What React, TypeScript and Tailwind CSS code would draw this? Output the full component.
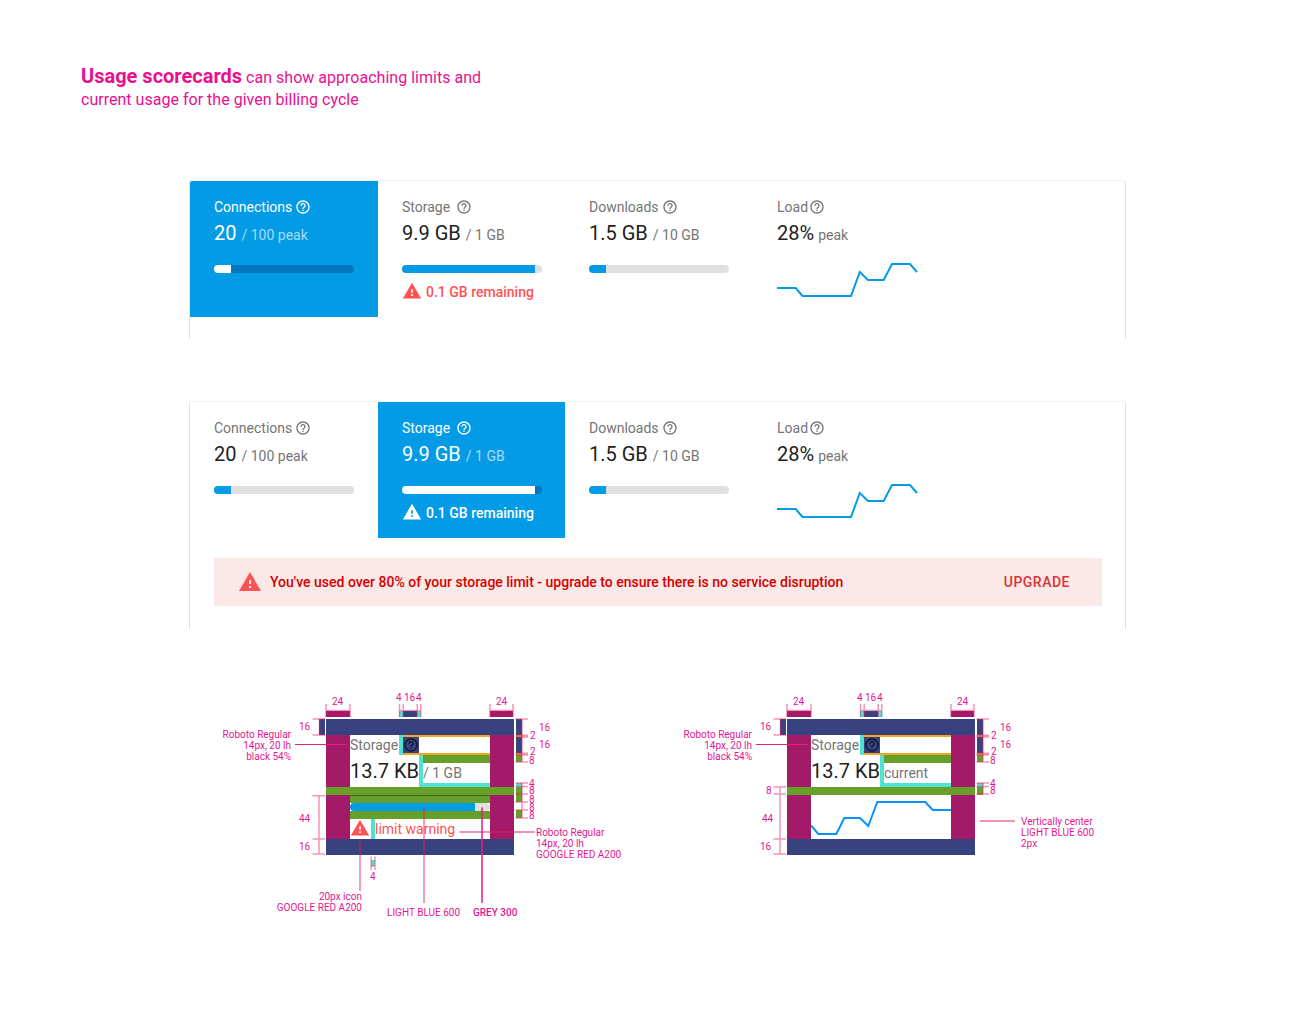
import type { ReactNode } from "react";
import clsx from "clsx";

function HelpIcon({ className }: { className?: string }) {
  return (
    <svg viewBox="0 0 24 24" className={clsx("size-4 shrink-0 fill-current", className)}>
      <path d="M11 18h2v-2h-2v2zm1-16C6.48 2 2 6.48 2 12s4.48 10 10 10 10-4.48 10-10S17.52 2 12 2zm0 18c-4.41 0-8-3.59-8-8s3.59-8 8-8 8 3.59 8 8-3.59 8-8 8zm0-14c-2.21 0-4 1.79-4 4h2c0-1.1.9-2 2-2s2 .9 2 2c0 2-3 1.75-3 5h2c0-2.25 3-2.5 3-5 0-2.21-1.79-4-4-4z" />
    </svg>
  );
}

function WarningIcon({ className }: { className?: string }) {
  return (
    <svg viewBox="0 0 24 24" className={clsx("shrink-0 fill-current", className)}>
      <path d="M1 21h22L12 2 1 21zm12-3h-2v-2h2v2zm0-4h-2v-4h2v4z" />
    </svg>
  );
}

type ScoreProps = {
  label: string;
  labelClass: string;
  tileClass: string;
  value: string;
  detail: string;
  detailClass?: string;
  active?: boolean;
  fillClass?: string;
  warning?: string;
  children?: ReactNode;
};

function Score({ label, labelClass, tileClass, value, detail, detailClass = "ml-[5px]", active, fillClass, warning, children }: ScoreProps) {
  return (
    <div className={clsx("h-[136px] shrink-0 pt-4 pl-6", tileClass, active && "bg-[#039be5]")}>
      <div className={clsx("flex h-5 items-center", active ? "text-white" : "text-[#757575]")}>
        <span className={clsx("shrink-0 whitespace-nowrap text-sm", labelClass)}>{label}</span>
        <HelpIcon />
      </div>
      <div className="flex h-8 items-baseline whitespace-nowrap">
        <span className={clsx("text-xl leading-8", active ? "text-white" : "text-[#212121]")}>{value}</span>
        <span className={clsx("text-sm", detailClass, active ? "text-[#a8dcf7]" : "text-[#757575]")}>{detail}</span>
      </div>
      {children ?? (
        <div className={clsx("mt-4 h-2 w-[140px] overflow-hidden rounded-full", active ? "bg-[#0277bd]" : "bg-[#e0e0e0]")}>
          <div className={clsx("h-full", fillClass, active ? "bg-white" : "bg-[#039be5]")} />
        </div>
      )}
      {warning && (
        <div className={clsx("mt-[9px] flex h-5 items-center gap-1 text-sm font-medium whitespace-nowrap", active ? "text-white" : "text-[#ff5252]")}>
          <WarningIcon className="mb-[2px] size-5" />
          <span>{warning}</span>
        </div>
      )}
    </div>
  );
}

function Scores({ selected }: { selected: "connections" | "storage" }) {
  return (
    <div className="flex">
      <Score label="Connections" labelClass="w-[81px]" tileClass={selected === "connections" ? "w-[188px] rounded-tl-[2px]" : "w-[188px]"} value="20" detail="/ 100 peak" fillClass="w-[17px]" active={selected === "connections"} />
      <Score label="Storage" labelClass="w-[54px]" tileClass="w-[187px]" value="9.9 GB" detail="/ 1 GB" fillClass="w-[133px]" warning="0.1 GB remaining" active={selected === "storage"} />
      <Score label="Downloads" labelClass="w-[73px]" tileClass="w-[188px]" value="1.5 GB" detail="/ 10 GB" fillClass="w-[17px]" />
      <Score label="Load" labelClass="w-8" tileClass="w-[188px]" value="28%" detail="peak" detailClass="ml-1">
        <svg viewBox="0 0 141 36" className="mt-[13px] h-9 w-[141px] fill-none stroke-[#039be5] stroke-2">
          <path d="M0 26H18.7L25.5 34H74L82.8 10L91 18H106.7L115 2H133L140 10" />
        </svg>
      </Score>
    </div>
  );
}

const cardClass =
  "ml-[189px] w-[937px] rounded-t-[3px] border-x border-t border-x-[#e2e2e2] border-t-[#f3f3f3]";

const PINK = "#e91e63";

/* Dimension ticks and swatches around a spec panel, in panel coordinates. */
function Swatches({ rects }: { rects: [number, number, number, number, string][] }) {
  return (
    <>
      {rects.map(([x, y, w, h, fill], i) => (
        <rect key={i} x={x} y={y} width={w} height={h} fill={fill} />
      ))}
    </>
  );
}

function SharedRedlines({ hasBar }: { hasBar: boolean }) {
  const navy = "#37427f";
  const wine = "#a21a68";
  const teal = "#50e3d2";
  const green = "#669f2a";
  return (
    <>
      <Swatches
        rects={[
          [0, -8, 24, 6, wine],
          [164, -8, 23, 6, wine],
          [73, -8, 4, 6, teal],
          [77, -8, 14, 6, navy],
          [91, -8, 4, 6, teal],
          [-7, 0, 6, 16, navy],
          [190, 0, 6, 16, navy],
          [190, 16, 6, 2, "#f5a623"],
          [190, 18, 6, 16, navy],
          [190, 34, 6, 2, "#f5a623"],
          [190, 36, 6, 7, green],
          [190, 64, 6, 4, teal],
          [190, 68, 6, hasBar ? 15 : 8, green],
        ]}
      />
      <g stroke={PINK} strokeOpacity="0.48" strokeWidth="1.5" fill="none">
        <path d="M0-15V-2M24-15V-2M0-8.5H24M164-15V-2M187-15V-2M164-8.5H187" />
        <path d="M73.5-15V-2M77.2-15V-2M91.2-15V-2M94.8-15V-2M73.5-8.5H95" />
        <path d="M-13.5 0H-1M-13.5 16H-1M-6.5 0V16" />
        <path d="M189.5 0H202M196 0V43M189.5 43H202" />
        <path d="M189.5 17.2H202M189.5 35.2H202" strokeWidth="3.2" />
        <path d="M189.5 64H202M189.5 67.6H202M189.5 75H202" />
      </g>
    </>
  );
}

type Note = [string, string];

const sharedNotes: Note[] = [
  ["left-[6px] top-[-23px] leading-[11px]", "24"],
  ["left-[170px] top-[-23px] leading-[11px]", "24"],
  ["left-[70px] top-[-27px] leading-[11px]", "4"],
  ["left-[78px] top-[-27px] leading-[11px]", "16"],
  ["left-[90px] top-[-27px] leading-[11px]", "4"],
  ["left-[-27px] top-[2px] leading-[11px]", "16"],
  ["left-[213px] top-[3px] leading-[11px]", "16"],
  ["left-[204px] top-[13px] leading-[7px]", "2"],
  ["left-[213px] top-[20px] leading-[11px]", "16"],
  ["left-[204px] top-[29px] leading-[7px]", "2"],
  ["left-[203px] top-[38px] leading-[7px]", "8"],
  ["left-[203px] top-[61px] leading-[7px]", "4"],
  ["left-[203px] top-[68px] leading-[7px]", "8"],
];

const barNotes: Note[] = [
  ["left-[203px] top-[77px] leading-[7px]", "8"],
  ["left-[203px] top-[85px] leading-[7px]", "8"],
  ["left-[203px] top-[93px] leading-[7px]", "8"],
  ["left-[-27px] top-[94px] leading-[11px]", "44"],
  ["left-[-27px] top-[122px] leading-[11px]", "16"],
  ["left-[44px] top-[152px] leading-[11px]", "4"],
  ["left-[210px] top-[108px] leading-[11px]", "Roboto Regular\n14px, 20 lh\nGOOGLE RED A200"],
  ["right-[152px] top-[172px] text-right leading-[11px]", "20px icon\nGOOGLE RED A200"],
  ["left-[61px] top-[188px] leading-[11px]", "LIGHT BLUE 600"],
  ["left-[147px] top-[188px] font-medium leading-[11px]", "GREY 300"],
];

const chartNotes: Note[] = [
  ["left-[-21px] top-[66px] leading-[11px]", "8"],
  ["left-[-25px] top-[94px] leading-[11px]", "44"],
  ["left-[-27px] top-[122px] leading-[11px]", "16"],
  ["left-[234px] top-[97px] leading-[11px]", "Vertically center\nLIGHT BLUE 600\n2px"],
];

function Notes({ notes }: { notes: Note[] }) {
  return (
    <>
      {notes.map(([place, text], i) => (
        <p key={i} className={clsx("absolute text-[10px] whitespace-pre text-[#e5168f]", place)}>
          {text}
        </p>
      ))}
    </>
  );
}

function SpecPanel({ detail, hasBar }: { detail: string; hasBar: boolean }) {
  return (
    <div className="relative h-[136px] w-[188px]">
      <div className="h-4 bg-[#37427f]" />
      <div className="flex h-[52px]">
        <div className="w-6 bg-[#a21a68]" />
        <div className="w-[140px]">
          <div className="flex h-5">
            <span className="w-[49px] shrink-0 text-sm leading-5 text-[#757575]">Storage</span>
            <div className="w-1 bg-[#50e3d2]" />
            <div className="flex-1 border-y-2 border-[#f5a623]">
              <div className="size-4 bg-[#37427f] text-[#11152f]">
                <HelpIcon />
              </div>
            </div>
          </div>
          <div className="flex h-8">
            <span className="w-[69px] shrink-0 text-xl leading-8 whitespace-nowrap text-[#212121]">13.7 KB</span>
            <div className="w-1 bg-[#50e3d2]" />
            <div className="flex flex-1 flex-col border-b-4 border-[#50e3d2]">
              <div className="h-2 bg-[#669f2a]" />
              <span className="text-sm leading-5 whitespace-nowrap text-[#757575]">{detail}</span>
            </div>
          </div>
        </div>
        <div className="w-6 bg-[#a21a68]" />
      </div>
      <div className="h-2 bg-[#669f2a]" />
      <div className="flex h-11">
        <div className="w-6 bg-[#a21a68]" />
        <div className="w-[140px]">
          {hasBar ? (
            <>
              <div className="h-2 border-t border-[#3f681a] bg-[#669f2a]" />
              <div className="h-2 overflow-hidden rounded-full bg-[#e0e0e0]">
                <div className="h-full w-[125px] bg-[#039be5]" />
              </div>
              <div className="h-2 bg-[#669f2a]" />
              <div className="flex h-5 items-center text-[#ff5252]">
                <WarningIcon className="mb-[2px] size-5" />
                <div className="ml-px h-5 w-1 shrink-0 bg-[#50e3d2]" />
                <span className="text-sm whitespace-nowrap">limit warning</span>
              </div>
            </>
          ) : (
            <svg viewBox="0 0 140 44" className="h-11 w-[140px] fill-none stroke-[#0494fa] stroke-2">
              <path d="M0 30.5L7.3 39H25.3L33.3 23H49L57.3 31L66.3 7H114.3L121.7 15H140" />
            </svg>
          )}
        </div>
        <div className="w-6 bg-[#a21a68]" />
      </div>
      <div className="h-4 bg-[#37427f]" />

      <svg className="absolute top-0 left-0 size-px overflow-visible">
        <SharedRedlines hasBar={hasBar} />
        <path d="M-31 25.5H21" stroke="#e3217c" strokeWidth="1" />
        {hasBar ? (
          <>
            <Swatches rects={[[190, 91, 6, 8, "#669f2a"], [45, 141, 4, 6, "#50e3d2"]]} />
            <g stroke={PINK} strokeOpacity="0.48" strokeWidth="1.5" fill="none">
              <path d="M189.5 83H202M189.5 91H202M189.5 99H202M196 64V99" />
              <path d="M-13.5 76.7H-1M-13.5 120H-1M-13.5 135H-1M-7 76.7V135" />
              <path d="M45.2 137.5V151M49 137.5V151M45.2 147H49" />
              <path d="M34 123V172M98 88.5V184M133.5 113H208.5" strokeWidth="1.8" />
            </g>
            <path d="M156 88.5V184" stroke="#e3217c" strokeOpacity="0.85" strokeWidth="1.8" />
          </>
        ) : (
          <g stroke={PINK} strokeOpacity="0.48" strokeWidth="1.5" fill="none">
            <path d="M196 64V75" />
            <path d="M-13.5 68H-1M-13.5 75H-1M-13.5 120H-1M-13.5 135H-1M-7 68V135" />
            <path d="M192.7 102H228" strokeWidth="1.8" />
          </g>
        )}
      </svg>
      <Notes notes={sharedNotes} />
      <Notes notes={[["right-[223px] top-[10px] text-right leading-[11px]", "Roboto Regular\n14px, 20 lh\nblack 54%"]]} />
      <Notes notes={hasBar ? barNotes : chartNotes} />
    </div>
  );
}

export default function App() {
  return (
    <main className="flex h-[1022px] w-[1315px] flex-col overflow-hidden bg-white font-['Roboto',sans-serif]">
      <h1 className="mt-[65px] ml-[81px] h-[46px] text-base leading-[22px] font-normal tracking-[0.02px] whitespace-nowrap text-[#e91090]">
        <span className="text-xl leading-[22px] font-bold tracking-normal">Usage scorecards</span> can show approaching limits and
        <br />
        current usage for the given billing cycle
      </h1>

      <section className={clsx(cardClass, "mt-[69px] h-[159px]")}>
        <Scores selected="connections" />
      </section>

      <section className={clsx(cardClass, "mt-[62px] h-[228px]")}>
        <Scores selected="storage" />
        <div className="mt-5 ml-6 flex h-12 w-[888px] items-center bg-[#fbe9e7] pr-8 pl-6">
          <WarningIcon className="size-6 text-[#ff5252]" />
          <p className="ml-2 text-sm font-medium text-[#d50000]">
            You've used over 80% of your storage limit - upgrade to ensure there is no service disruption
          </p>
          <button className="ml-auto text-sm font-medium tracking-[0.5px] text-[#db3236]">UPGRADE</button>
        </div>
      </section>

      <section className="mt-[90px] ml-[326px] flex gap-[273px]">
        <SpecPanel detail="/ 1 GB" hasBar />
        <SpecPanel detail="current" hasBar={false} />
      </section>
    </main>
  );
}
